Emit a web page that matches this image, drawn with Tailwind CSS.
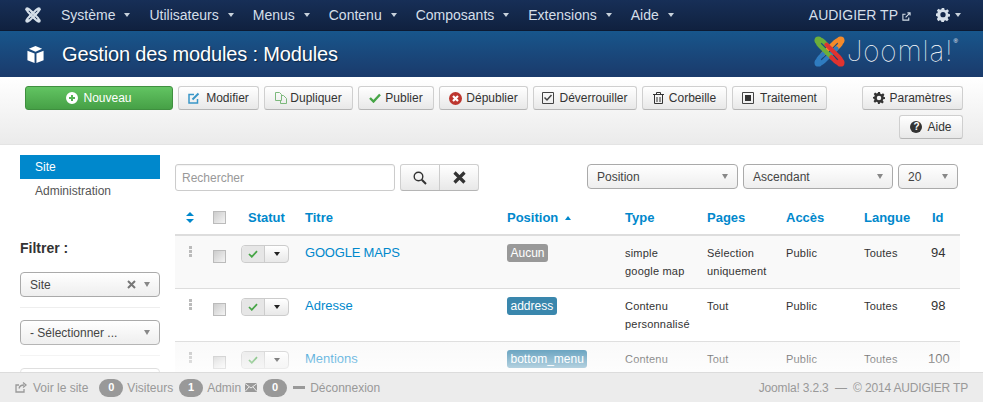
<!DOCTYPE html>
<html lang="fr">
  <head>
    <meta charset="UTF-8" />
    <meta name="viewport" content="width=device-width, initial-scale=1.0" />
    <title>Gestion des modules : Modules</title>
    <script src="https://cdn.jsdelivr.net/npm/@tailwindcss/browser@4"></script>
  </head>
  <body class="relative h-[402px] overflow-hidden bg-white font-['Liberation_Sans',Arial,sans-serif] text-[12px] text-[#333]">
    <!-- top nav -->
    <nav class="flex h-[31px] items-center border-b border-[#0c1a33] bg-linear-to-b from-[#172f57] to-[#10213f] pl-[25px] pr-[22px] text-[14px] text-[#d5dfe9]">
      <svg class="mr-[20px] h-[16px] w-[16px]" viewBox="0 0 32 32">
        <g fill="none" stroke="#d5dfe9" stroke-width="4" stroke-linecap="round">
          <path d="M14 10 10 6Q7 3 4.500 5 3 7 6 10L19 23" />
          <path d="M14 10 10 6Q7 3 4.500 5 3 7 6 10L19 23" transform="rotate(90 16 16)" />
          <path d="M14 10 10 6Q7 3 4.500 5 3 7 6 10L19 23" transform="rotate(180 16 16)" />
          <path d="M14 10 10 6Q7 3 4.500 5 3 7 6 10L19 23" transform="rotate(270 16 16)" />
        </g>
        <g fill="#d5dfe9"><circle cx="4.500" cy="4.500" r="4" /><circle cx="27.500" cy="4.500" r="4" /><circle cx="4.500" cy="27.500" r="4" /><circle cx="27.500" cy="27.500" r="4" /></g>
      </svg>
      <div class="flex items-center gap-[19px]">
        <a class="flex items-center gap-[9px]">Système <i class="h-0 w-0 border-x-[3.5px] border-t-[4px] border-x-transparent border-t-[#c8d2dc]"></i></a>
        <a class="flex items-center gap-[9px]">Utilisateurs <i class="h-0 w-0 border-x-[3.5px] border-t-[4px] border-x-transparent border-t-[#c8d2dc]"></i></a>
        <a class="flex items-center gap-[9px]">Menus <i class="h-0 w-0 border-x-[3.5px] border-t-[4px] border-x-transparent border-t-[#c8d2dc]"></i></a>
        <a class="flex items-center gap-[9px]">Contenu <i class="h-0 w-0 border-x-[3.5px] border-t-[4px] border-x-transparent border-t-[#c8d2dc]"></i></a>
        <a class="flex items-center gap-[9px]">Composants <i class="h-0 w-0 border-x-[3.5px] border-t-[4px] border-x-transparent border-t-[#c8d2dc]"></i></a>
        <a class="flex items-center gap-[9px]">Extensions <i class="h-0 w-0 border-x-[3.5px] border-t-[4px] border-x-transparent border-t-[#c8d2dc]"></i></a>
        <a class="flex items-center gap-[9px]">Aide <i class="h-0 w-0 border-x-[3.5px] border-t-[4px] border-x-transparent border-t-[#c8d2dc]"></i></a>
      </div>
      <div class="ml-auto flex items-center">
        <span>AUDIGIER TP</span>
        <svg class="ml-[4px] mt-[2px] h-[9px] w-[9px]" viewBox="0 0 10 10" fill="none" stroke="#d5dfe9" stroke-width="1.2"><path d="M7.5 6V9H1V2.5H4M4 6 9 1M6 1H9V4" /></svg>
        <svg class="ml-[25px] h-[14px] w-[14px]" viewBox="0 0 24 24"><path fill="#d5dfe9" fill-rule="evenodd" d="M10 1h4l.6 3 2.3 1 2.6-1.7 2.8 2.8L20 8.7l1 2.3 3 .6v3.8l-3 .6-1 2.3 1.7 2.6-2.8 2.8-2.6-1.7-2.3 1-.6 3h-4l-.6-3-2.3-1-2.6 1.7L1.500 19.900 3.200 17.300l-1-2.300-3-.6v-3.800l3-.6 1-2.300L1.500 5.100l2.800-2.800L6.900 4l2.300-1zM12 8a4.500 4.500 0 1 0 0 9 4.500 4.500 0 0 0 0-9z" transform="translate(0 -1)" /></svg>
        <i class="ml-[5px] h-0 w-0 border-x-[3.5px] border-t-[4px] border-x-transparent border-t-[#c8d2dc]"></i>
      </div>
    </nav>

    <!-- title bar -->
    <header class="flex h-[46px] items-center bg-linear-to-b from-[#17568c] to-[#1a3a6b] pl-[26px] pr-[25px]">
      <svg class="mr-[17px] h-[19px] w-[19px]" viewBox="0 0 20 20" fill="#fff">
        <path d="M10 1 17 4 10 7 3 4z" />
        <path d="M1.500 6 9 9v10l-7.500-3z" />
        <path d="M18.500 6 11 9v10l7.500-3z" />
      </svg>
      <h1 class="text-[20px] leading-none tracking-[-0.15px] text-white [text-shadow:1px_1px_1px_rgba(0,0,0,0.45)]">Gestion des modules : Modules</h1>
      <div class="mb-[6px] ml-auto flex items-center">
        <svg class="h-[31px] w-[31px]" viewBox="0 0 32 32" fill="none" stroke-width="4.500" stroke-linecap="round">
          <g stroke="#f38a2a" fill="#f38a2a" transform="rotate(90 16 16)"><path fill="none" d="M14 10 10 6Q7 3 4.500 5 3 7 6 10L19 23" /><circle stroke="none" cx="4.500" cy="4.500" r="4" /></g>
          <g stroke="#2f7cc0" fill="#2f7cc0" transform="rotate(270 16 16)"><path fill="none" d="M14 10 10 6Q7 3 4.500 5 3 7 6 10L19 23" /><circle stroke="none" cx="4.500" cy="4.500" r="4" /></g>
          <g stroke="#6cae3a" fill="#6cae3a"><path fill="none" d="M14 10 10 6Q7 3 4.500 5 3 7 6 10L19 23" /><circle stroke="none" cx="4.500" cy="4.500" r="4" /></g>
          <g stroke="#e0332f" fill="#e0332f" transform="rotate(180 16 16)"><path fill="none" d="M14 10 10 6Q7 3 4.500 5 3 7 6 10L19 23" /><circle stroke="none" cx="4.500" cy="4.500" r="4" /></g>
        </svg>
        <span class="ml-[2px] font-['Inter',sans-serif] text-[28px] font-thin leading-none tracking-[0.9px] text-white">Joomla!</span>
        <sup class="mb-[14px] text-[6px] text-white">®</sup>
      </div>
    </header>

    <!-- toolbar -->
    <section class="flex h-[68px] border-b border-[#e4e4e4] bg-linear-to-b from-white to-[#ebebeb] pl-[25px] pr-[20px] pt-[9px]">
      <div class="flex h-[24px] gap-[5px]">
        <button class="flex h-[24px] w-[148px] items-center justify-center gap-[5px] rounded-[3px] border border-[#3f8f3f] bg-linear-to-b from-[#62c462] to-[#46a046] text-white">
          <svg class="h-[12px] w-[12px]" viewBox="0 0 12 12"><path fill="#fff" fill-rule="evenodd" d="M6 0a6 6 0 1 0 0 12A6 6 0 0 0 6 0zM5 3h2v2h2v2H7v2H5V7H3V5h2z" /></svg>Nouveau
        </button>
        <button class="flex h-[24px] w-[81px] items-center justify-center gap-[6px] rounded-[3px] border border-[#cfcfcf] border-b-[#b5b5b5] bg-linear-to-b from-white to-[#e8e8e8]">
          <svg class="h-[12px] w-[12px]" viewBox="0 0 12 12" fill="none" stroke="#3a96c8" stroke-width="1.500"><path d="M9.500 7v4H1V2.500h5" /><path stroke-width="2" d="M4.500 7.500 10.500 1.500" /></svg>Modifier
        </button>
        <button class="flex h-[24px] w-[89px] items-center justify-center gap-[3px] rounded-[3px] border border-[#cfcfcf] border-b-[#b5b5b5] bg-linear-to-b from-white to-[#e8e8e8]">
          <svg class="h-[12px] w-[12px]" viewBox="0 0 12 12" fill="none" stroke="#7cb97c"><path d="M.5 8.500V.5h4l2 2v6zM6.500 3.500h2l3 3v5h-6v-3" /></svg>Dupliquer
        </button>
        <button class="flex h-[24px] w-[76px] items-center justify-center gap-[4px] rounded-[3px] border border-[#cfcfcf] border-b-[#b5b5b5] bg-linear-to-b from-white to-[#e8e8e8]">
          <svg class="h-[10px] w-[12px]" viewBox="0 0 12 10" fill="none" stroke="#46a546" stroke-width="2.400"><path d="M1 5l3.500 3.500L11 1.500" /></svg>Publier
        </button>
        <button class="flex h-[24px] w-[89px] items-center justify-center gap-[4px] rounded-[3px] border border-[#cfcfcf] border-b-[#b5b5b5] bg-linear-to-b from-white to-[#e8e8e8]">
          <svg class="h-[13px] w-[13px]" viewBox="0 0 13 13"><circle cx="6.500" cy="6.500" r="6.500" fill="#bd362f" /><path stroke="#fff" stroke-width="2.200" d="M4 4l5 5M9 4l-5 5" /></svg>Dépublier
        </button>
        <button class="flex h-[24px] w-[104px] items-center justify-center gap-[5px] rounded-[3px] border border-[#cfcfcf] border-b-[#b5b5b5] bg-linear-to-b from-white to-[#e8e8e8]">
          <svg class="h-[12px] w-[12px]" viewBox="0 0 12 12" fill="none" stroke="#444"><path d="M.5.5h11v11H.5z" /><path stroke-width="1.500" d="M2.500 5.500 5 8l4.500-5" /></svg>Déverrouiller
        </button>
        <button class="flex h-[24px] w-[85px] items-center justify-center gap-[5px] rounded-[3px] border border-[#cfcfcf] border-b-[#b5b5b5] bg-linear-to-b from-white to-[#e8e8e8]">
          <svg class="h-[12px] w-[11px]" viewBox="0 0 11 12" fill="none" stroke="#333"><path d="M0 2.500h11M3.500 2V.5h4V2M1.500 3v8.500h8V3M4 5v5M7 5v5" /></svg>Corbeille
        </button>
        <button class="flex h-[24px] w-[95px] items-center justify-center gap-[6px] rounded-[3px] border border-[#cfcfcf] border-b-[#b5b5b5] bg-linear-to-b from-white to-[#e8e8e8]">
          <svg class="h-[12px] w-[12px]" viewBox="0 0 12 12"><path fill="none" stroke="#444" d="M.5.5h11v11H.5z" /><path fill="#333" d="M3 3h6v6H3z" /></svg>Traitement
        </button>
      </div>
      <div class="ml-auto flex flex-col items-end gap-[5px]">
        <button class="flex h-[24px] w-[101px] items-center justify-center gap-[4px] rounded-[3px] border border-[#cfcfcf] border-b-[#b5b5b5] bg-linear-to-b from-white to-[#e8e8e8]">
          <svg class="h-[12px] w-[12px]" viewBox="0 0 24 24"><path fill="#333" fill-rule="evenodd" d="M10 0h4l.7 3.500 2.400 1 3-2 2.800 2.800-2 3 1 2.400L24 10v4l-3.500.7-1 2.400 2 3-2.800 2.800-3-2-2.400 1L14 24h-4l-.7-3.500-2.400-1-3 2L1.100 18.700l2-3-1-2.400L-1 12.600V10l3.500-.7 1-2.400-2-3L4.300 1.100l3 2 2.400-1zM12 7.500a4.500 4.500 0 1 0 0 9 4.500 4.500 0 0 0 0-9z" /></svg>Paramètres
        </button>
        <button class="flex h-[24px] w-[64px] items-center justify-center gap-[5px] rounded-[3px] border border-[#cfcfcf] border-b-[#b5b5b5] bg-linear-to-b from-white to-[#e8e8e8]">
          <span class="flex h-[12px] w-[12px] items-center justify-center rounded-full bg-[#333] text-[10px] font-bold leading-none text-white">?</span>Aide
        </button>
      </div>
    </section>

    <!-- main -->
    <main class="flex pl-[20px]">
      <aside class="w-[140px] pt-[10px]">
        <div class="flex h-[24px] items-center bg-[#0088cc] pl-[15px] text-white">Site</div>
        <div class="flex h-[24px] items-center pl-[15px] text-[#555]">Administration</div>
        <div class="mt-[35px] text-[14px] font-bold leading-[20px] text-[#333]">Filtrer :</div>
        <div class="mt-[14px] flex h-[25px] items-center rounded-[4px] border border-[#aaa] bg-linear-to-b from-white to-[#eee] pl-[9px] pr-[9px] text-[#444]">
          Site
          <svg class="ml-auto h-[9px] w-[9px]" viewBox="0 0 9 9" stroke="#777" stroke-width="2"><path d="M1 1l7 7M8 1 1 8" /></svg>
          <i class="ml-[8px] h-0 w-0 border-x-[3.5px] border-t-[5px] border-x-transparent border-t-[#888]"></i>
        </div>
        <div class="mt-[10px] border-t border-[#eee]"></div>
        <div class="mt-[12px] flex h-[25px] items-center rounded-[4px] border border-[#aaa] bg-linear-to-b from-white to-[#eee] pl-[9px] pr-[9px] text-[#444]">
          - Sélectionner ...
          <i class="ml-auto h-0 w-0 border-x-[3.5px] border-t-[5px] border-x-transparent border-t-[#888]"></i>
        </div>
        <div class="mt-[10px] border-t border-[#eee]"></div>
        <div class="mt-[12px] h-[25px] rounded-[4px] border border-[#aaa]"></div>
      </aside>

      <div class="ml-[15px] w-[785px] pt-[19px]">
        <div class="flex h-[27px] items-start">
          <div class="flex h-[27px] w-[220px] items-center rounded-[3px] border border-[#ccc] pl-[6px] text-[#999] shadow-[inset_0_1px_1px_rgba(0,0,0,0.05)]">Rechercher</div>
          <div class="ml-[5px] flex h-[27px] w-[79px] rounded-[3px] border border-[#cfcfcf] border-b-[#b5b5b5] bg-linear-to-b from-white to-[#e8e8e8]">
            <div class="flex w-[39px] items-center justify-center border-r border-[#ccc]">
              <svg class="h-[14px] w-[14px]" viewBox="0 0 14 14" fill="none" stroke="#333"><circle cx="5.500" cy="5.500" r="4.300" stroke-width="1.400" /><path stroke-width="2" d="M8.800 8.800 13 13" /></svg>
            </div>
            <div class="flex flex-1 items-center justify-center">
              <svg class="h-[13px] w-[13px]" viewBox="0 0 13 13" stroke="#333" stroke-width="3.200"><path d="M1.500 1.500l10 10M11.500 1.500l-10 10" /></svg>
            </div>
          </div>
          <div class="ml-auto mr-[2px] flex gap-[5px]">
            <div class="flex h-[25px] w-[151px] items-center rounded-[4px] border border-[#aaa] bg-linear-to-b from-white to-[#eee] pl-[9px] pr-[9px] text-[#444]">
              Position <i class="ml-auto h-0 w-0 border-x-[3.5px] border-t-[5px] border-x-transparent border-t-[#888]"></i>
            </div>
            <div class="flex h-[25px] w-[150px] items-center rounded-[4px] border border-[#aaa] bg-linear-to-b from-white to-[#eee] pl-[9px] pr-[9px] text-[#444]">
              Ascendant <i class="ml-auto h-0 w-0 border-x-[3.5px] border-t-[5px] border-x-transparent border-t-[#888]"></i>
            </div>
            <div class="flex h-[25px] w-[60px] items-center rounded-[4px] border border-[#aaa] bg-linear-to-b from-white to-[#eee] pl-[9px] pr-[9px] text-[#444]">
              20 <i class="ml-auto h-0 w-0 border-x-[3.5px] border-t-[5px] border-x-transparent border-t-[#888]"></i>
            </div>
          </div>
        </div>

        <table class="mt-[14px] w-[785px] table-fixed border-collapse">
          <colgroup>
            <col class="w-[31px]" /><col class="w-[35px]" /><col class="w-[57px]" /><col class="w-[202px]" /><col class="w-[118px]" /><col class="w-[82px]" /><col class="w-[79px]" /><col class="w-[78px]" /><col class="w-[68px]" /><col class="w-[35px]" />
          </colgroup>
          <thead>
            <tr class="h-[30px] border-b-2 border-[#ddd] text-left text-[13px] font-bold text-[#0088cc] [&>th]:pb-[4px]">
              <th class="pl-[11px] font-bold">
                <svg class="h-[11px] w-[8px]" viewBox="0 0 8 11" fill="#0088cc"><path d="M4 0 8 4H0zM0 7h8l-4 4z" /></svg>
              </th>
              <th class="pl-[7px]"><span class="block h-[13px] w-[13px] border border-[#bbb] bg-linear-to-br from-[#ccc] to-[#f4f4f4]"></span></th>
              <th class="pl-[7px]">Statut</th>
              <th class="pl-[7px]">Titre</th>
              <th class="pl-[7px]"><span class="flex items-center gap-[7px]">Position <i class="h-0 w-0 border-x-[3.5px] border-b-[4px] border-x-transparent border-b-[#0088cc]"></i></span></th>
              <th class="pl-[7px]">Type</th>
              <th class="pl-[7px]">Pages</th>
              <th class="pl-[7px]">Accès</th>
              <th class="pl-[7px]">Langue</th>
              <th class="pl-[7px]">Id</th>
            </tr>
          </thead>
          <tbody class="text-[11px] leading-[18px] tracking-[0.2px] text-[#333]">
            <tr class="h-[53px] border-b border-[#ddd] bg-[#f9f9f9] align-top">
              <td class="pl-[14px] pt-[10px]"><svg class="block h-[11px] w-[3px]" viewBox="0 0 3 11" fill="#bbb"><path d="M0 0h3v3H0zM0 4h3v3H0zM0 8h3v3H0z" /></svg></td>
              <td class="pl-[7px] pt-[14px]"><span class="block h-[13px] w-[13px] border border-[#bbb] bg-linear-to-br from-[#ccc] to-[#f4f4f4]"></span></td>
              <td class="pt-[9px]">
                <div class="flex h-[18px] w-[48px] rounded-[4px] border border-[#ccc] bg-linear-to-b from-white to-[#e8e8e8]">
                  <span class="flex w-[23px] items-center justify-center rounded-l-[4px] border-r border-[#ccc] bg-[#e6e6e6]"><svg class="h-[8px] w-[10px]" viewBox="0 0 12 10" fill="none" stroke="#46a546" stroke-width="2.200"><path d="M1 5l3.500 3.500L11 1.500" /></svg></span>
                  <span class="flex flex-1 items-center justify-center"><i class="h-0 w-0 border-x-[3.5px] border-t-[4px] border-x-transparent border-t-[#222]"></i></span>
                </div>
              </td>
              <td class="pl-[7px] pt-[8px] text-[13px] tracking-[-0.2px] text-[#0088cc]">GOOGLE MAPS</td>
              <td class="pl-[7px] pt-[8px]"><span class="inline-block h-[18px] rounded-[3px] bg-[#999] px-[3.5px] text-[12px] leading-[18px] tracking-normal text-white">Aucun</span></td>
              <td class="pl-[7px] pt-[8px]">simple<br />google map</td>
              <td class="pl-[7px] pt-[8px]">Sélection<br />uniquement</td>
              <td class="pl-[7px] pt-[8px]">Public</td>
              <td class="pl-[7px] pt-[8px]">Toutes</td>
              <td class="pl-[6px] pt-[8px] text-[13px] tracking-normal">94</td>
            </tr>
            <tr class="h-[53px] border-b border-[#ddd] bg-white align-top">
              <td class="pl-[14px] pt-[10px]"><svg class="block h-[11px] w-[3px]" viewBox="0 0 3 11" fill="#bbb"><path d="M0 0h3v3H0zM0 4h3v3H0zM0 8h3v3H0z" /></svg></td>
              <td class="pl-[7px] pt-[14px]"><span class="block h-[13px] w-[13px] border border-[#bbb] bg-linear-to-br from-[#ccc] to-[#f4f4f4]"></span></td>
              <td class="pt-[9px]">
                <div class="flex h-[18px] w-[48px] rounded-[4px] border border-[#ccc] bg-linear-to-b from-white to-[#e8e8e8]">
                  <span class="flex w-[23px] items-center justify-center rounded-l-[4px] border-r border-[#ccc] bg-[#e6e6e6]"><svg class="h-[8px] w-[10px]" viewBox="0 0 12 10" fill="none" stroke="#46a546" stroke-width="2.200"><path d="M1 5l3.500 3.500L11 1.500" /></svg></span>
                  <span class="flex flex-1 items-center justify-center"><i class="h-0 w-0 border-x-[3.5px] border-t-[4px] border-x-transparent border-t-[#222]"></i></span>
                </div>
              </td>
              <td class="pl-[7px] pt-[8px] text-[13px] tracking-normal text-[#0088cc]">Adresse</td>
              <td class="pl-[7px] pt-[8px]"><span class="inline-block h-[18px] rounded-[3px] bg-[#3a87ad] px-[3.5px] text-[12px] leading-[18px] tracking-normal text-white">address</span></td>
              <td class="pl-[7px] pt-[8px]">Contenu<br />personnalisé</td>
              <td class="pl-[7px] pt-[8px]">Tout</td>
              <td class="pl-[7px] pt-[8px]">Public</td>
              <td class="pl-[7px] pt-[8px]">Toutes</td>
              <td class="pl-[6px] pt-[8px] text-[13px] tracking-normal">98</td>
            </tr>
            <tr class="h-[53px] bg-[#f9f9f9] align-top">
              <td class="pl-[14px] pt-[10px]"><svg class="block h-[11px] w-[3px]" viewBox="0 0 3 11" fill="#bbb"><path d="M0 0h3v3H0zM0 4h3v3H0zM0 8h3v3H0z" /></svg></td>
              <td class="pl-[7px] pt-[14px]"><span class="block h-[13px] w-[13px] border border-[#bbb] bg-linear-to-br from-[#ccc] to-[#f4f4f4]"></span></td>
              <td class="pt-[9px]">
                <div class="flex h-[18px] w-[48px] rounded-[4px] border border-[#ccc] bg-linear-to-b from-white to-[#e8e8e8]">
                  <span class="flex w-[23px] items-center justify-center rounded-l-[4px] border-r border-[#ccc] bg-[#e6e6e6]"><svg class="h-[8px] w-[10px]" viewBox="0 0 12 10" fill="none" stroke="#46a546" stroke-width="2.200"><path d="M1 5l3.500 3.500L11 1.500" /></svg></span>
                  <span class="flex flex-1 items-center justify-center"><i class="h-0 w-0 border-x-[3.5px] border-t-[4px] border-x-transparent border-t-[#222]"></i></span>
                </div>
              </td>
              <td class="pl-[7px] pt-[8px] text-[13px] tracking-normal text-[#0088cc]">Mentions</td>
              <td class="pl-[7px] pt-[8px]"><span class="inline-block h-[18px] rounded-[3px] bg-[#3a87ad] px-[3.5px] text-[12px] leading-[18px] tracking-normal text-white">bottom_menu</span></td>
              <td class="pl-[7px] pt-[8px]">Contenu</td>
              <td class="pl-[7px] pt-[8px]">Tout</td>
              <td class="pl-[7px] pt-[8px]">Public</td>
              <td class="pl-[7px] pt-[8px]">Toutes</td>
              <td class="pl-[3px] pt-[8px] text-[13px] tracking-normal">100</td>
            </tr>
          </tbody>
        </table>
      </div>
    </main>

    <!-- fade + status bar sit over the scrolling content -->
    <div class="absolute bottom-[30px] left-0 right-0 h-[34px] bg-linear-to-b from-white/0 to-white/70"></div>
    <footer class="absolute bottom-0 left-0 right-0 flex h-[30px] items-center border-t border-[#dcdcdc] bg-[#ececec] pl-[15px] pr-[15px] text-[12px] text-[#999]">
      <svg class="mr-[6px] h-[11px] w-[12px]" viewBox="0 0 12 11" fill="none" stroke="#999" stroke-width="1.300"><path d="M9 7v3H1V3h3M4 6.500C4.500 4 6.500 3 9 3M8 .5 11 3 8 5.500" /></svg>
      <span>Voir le site</span>
      <span class="ml-[11px] flex h-[18px] w-[24px] items-center justify-center rounded-full bg-[#999] text-[11px] font-bold text-white">0</span>
      <span class="ml-[4px]">Visiteurs</span>
      <span class="ml-[6px] flex h-[18px] w-[24px] items-center justify-center rounded-full bg-[#999] text-[11px] font-bold text-white">1</span>
      <span class="ml-[4px]">Admin</span>
      <svg class="ml-[4px] h-[9px] w-[12px]" viewBox="0 0 12 9"><path fill="#999" d="M0 0h12v9H0z" /><path fill="none" stroke="#ececec" d="M0 .5 6 5l6-4.500M0 8.500 4 4M12 8.500 8 4" /></svg>
      <span class="ml-[6px] flex h-[18px] w-[24px] items-center justify-center rounded-full bg-[#999] text-[11px] font-bold text-white">0</span>
      <span class="ml-[6px] h-[3px] w-[12px] bg-[#999]"></span>
      <span class="ml-[5px]">Déconnexion</span>
      <span class="ml-auto tracking-[-0.17px]">Joomla! 3.2.3 &nbsp;— &nbsp;© 2014 AUDIGIER TP</span>
    </footer>
  </body>
</html>
